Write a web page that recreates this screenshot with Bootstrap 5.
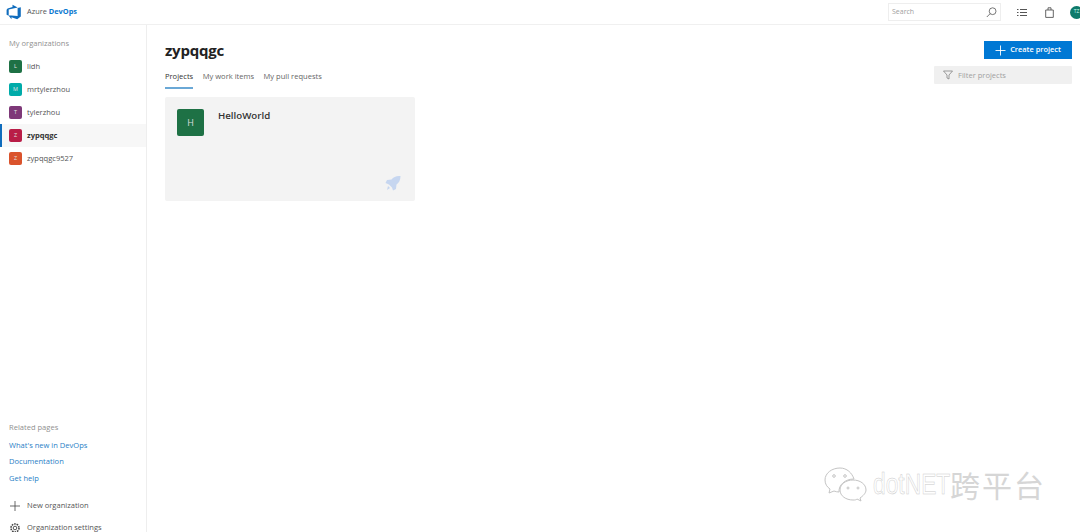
<!DOCTYPE html>
<html lang="en"><head><meta charset="utf-8"><title>Azure DevOps</title>
<link href="https://cdn.jsdelivr.net/npm/bootstrap@5.3.0/dist/css/bootstrap.min.css" rel="stylesheet">
<style>
html,body{height:532px;overflow:hidden}
body{font-family:"Open Sans","Noto Sans",sans-serif;font-size:7.55px;color:#333;background:#fff;position:relative}
.topbar{height:25px;border-bottom:1px solid #f0f0f0;padding-left:6px}
.brand{font-size:7.4px;margin-left:5px;color:#555}
.brand b{color:#0a78d0;font-weight:700}
.searchbox{width:113px;height:18px;border:1px solid #eee;margin-right:16px;padding:0 3px 0 3px;color:#a0a0a0;font-size:7px}
.topicon{margin-right:18px}
.topicon.bagicon{margin-right:16px}
.useravatar{width:13px;height:13px;border-radius:50%;background:#0e7a6b;color:#cfe;font-size:5px;margin-right:-3px;flex:none;overflow:hidden}
.sidebar{width:147px;height:507px;border-right:1px solid #eee;overflow:hidden;flex:none}
.sidehead{color:#909090;padding:13px 0 0 9px;height:30px;line-height:10px;flex:none}
.orgrow{height:23px;padding-left:9px;color:#555;flex:none}
.orgrow.current{background:#f7f7f7;border-left:2px solid #0f6cbd;padding-left:7px;font-weight:700;color:#333}
.orgmark{width:13px;height:13px;border-radius:2px;color:#e0e0e0;font-size:5.5px;margin-right:5px;flex:none;font-weight:400}
.relhead{color:#909090;padding-left:9px;height:17px;line-height:13px;flex:none}
.rellink{display:block;color:#2a80c6;text-decoration:none;padding-left:9px;height:16.500px;line-height:14px;flex:none}
.sideaction{height:22px;color:#555;padding-left:9px;flex:none}
.sideaction svg{margin-right:6px;flex:none}
.sideaction.lastone{margin-bottom:-7px}
.mainpane{padding:0 8px 0 18px}
.pagetitle{font-size:15px;font-weight:700;color:#222;margin:0;line-height:20px;padding-top:15px;height:36px;letter-spacing:-.2px}
.tabrow{height:28px}
.tabitem{margin-right:9.500px;color:#666;padding-top:9px;height:28px;line-height:12px}
.tabitem.on{color:#333;border-bottom:2px solid #6aa8d6;box-sizing:border-box}
.createbtn{background:#0078d4;color:#fff;width:88px;height:18px;font-size:7.4px;font-weight:600;border:0;border-radius:0;padding:0}
.createbtn:hover{background:#0078d4;color:#fff}
.filterbox{width:138px;height:18px;background:#f0f0f0;border-radius:1px;color:#a0a0a0;padding-left:9px;margin-top:5px}
.filterbox span{margin-left:5px;padding-top:1px}
.projcard{width:250px;height:104px;background:#f3f3f3;border:0;border-radius:2px;margin-top:8px;padding:12px;position:relative}
.projmark{width:27px;height:27px;background:#1e7145;color:#ddd;font-size:9px;border-radius:2px;flex:none}
.projname{font-size:9.700px;font-weight:600;color:#333;margin-left:14px;line-height:14px}
.projrocket{position:absolute;right:14px;bottom:10px}
.wmark{position:absolute;left:824px;top:466px;pointer-events:none}
.wmlatin,.wmcjk{line-height:36px;white-space:nowrap}
.wmlatin{color:#fff;-webkit-text-stroke:.5px #cacaca;display:inline-block;width:77px;margin-left:5px;font-family:"Liberation Sans",sans-serif;font-size:30px;transform:scaleX(.76);transform-origin:left center}
.wmcjk{color:#d6d6d6;font-family:"Noto Sans CJK SC",sans-serif;font-size:30px;letter-spacing:2px}
</style></head><body>
<div class="d-flex flex-column">
<header class="topbar d-flex align-items-center">
<svg width="16" height="16" viewBox="0 0 16 16"><path d="M14.800 3.200v9.200l-3.600 2.900-5.700-2v2L2.300 11.300l9.300.8V4.100zM11.700 3.600 6.500.8v2.100L1.600 4.400 .6 5.800v5l2.100.9V5.400z" fill="#0f6cbd"/></svg>
<span class="brand">Azure <b>DevOps</b></span>
<div class="ms-auto d-flex align-items-center">
<div class="searchbox d-flex align-items-center justify-content-between"><span>Search</span>
<svg width="11" height="11" viewBox="0 0 11 11" fill="none" stroke="#555" stroke-width=".8"><circle cx="6.600" cy="4.200" r="3.400"/><path d="M4.200 6.600.8 10"/></svg></div>
<svg class="topicon" width="10" height="9" viewBox="0 0 10 9" stroke="#555" fill="none"><path d="M0 1.500h1.500M3 1.500h7M0 4.500h1.500M3 4.500h7M0 7.500h1.500M3 7.500h7"/></svg>
<svg class="topicon bagicon" width="9" height="11" viewBox="0 0 9 11" stroke="#555" fill="none" stroke-width=".9"><path d="M.7 3h7.600v7.400H.7zM3 3V.8h3V3"/></svg>
<div class="useravatar d-flex align-items-center justify-content-center">TZ</div>
</div></header>
<div class="d-flex flex-grow-1">
<aside class="sidebar d-flex flex-column">
<div class="sidehead">My organizations</div>
<div class="orgrow d-flex align-items-center"><span class="orgmark d-flex align-items-center justify-content-center" style="background:#1e7145">L</span>lidh</div>
<div class="orgrow d-flex align-items-center"><span class="orgmark d-flex align-items-center justify-content-center" style="background:#00aba9">M</span>mrtylerzhou</div>
<div class="orgrow d-flex align-items-center"><span class="orgmark d-flex align-items-center justify-content-center" style="background:#7e3878">T</span>tylerzhou</div>
<div class="orgrow current d-flex align-items-center"><span class="orgmark d-flex align-items-center justify-content-center" style="background:#b91d47">Z</span>zypqqgc</div>
<div class="orgrow d-flex align-items-center"><span class="orgmark d-flex align-items-center justify-content-center" style="background:#da532c">Z</span>zypqqgc9527</div>
<div class="mt-auto"></div>
<div class="relhead">Related pages</div>
<a class="rellink" href="#">What's new in DevOps</a>
<a class="rellink" href="#">Documentation</a>
<a class="rellink" href="#">Get help</a>
<div class="sideaction d-flex align-items-center mt-2"><svg width="12" height="12" viewBox="0 0 12 12" stroke="#444" stroke-width=".8"><path d="M6 1v10M1 6h10"/></svg>New organization</div>
<div class="sideaction lastone d-flex align-items-center"><svg width="12" height="12" viewBox="0 0 12 12" fill="none" stroke="#444" stroke-width=".9"><circle cx="6" cy="6" r="1.800"/><circle cx="6" cy="6" r="4" stroke-dasharray="1.600 .9" stroke-width="1.600"/></svg>Organization settings</div>
</aside>
<main class="mainpane flex-grow-1">
<div class="d-flex justify-content-between align-items-start">
<h1 class="pagetitle">zypqqgc</h1>
<button class="createbtn btn d-flex align-items-center justify-content-center mt-3"><svg width="11" height="11" viewBox="0 0 11 11" stroke="#fff" stroke-width=".9" class="me-1"><path d="M5.500.5v10M.5 5.500h10"/></svg>Create project</button>
</div>
<div class="tabrow d-flex justify-content-between">
<div class="d-flex">
<div class="tabitem on">Projects</div><div class="tabitem">My work items</div><div class="tabitem">My pull requests</div>
</div>
<div class="filterbox d-flex align-items-center"><svg width="10" height="10" viewBox="0 0 10 10" fill="none" stroke="#777" stroke-width=".7"><path d="M.5 1h9L6 5v4L4 8V5z"/></svg><span>Filter projects</span></div>
</div>
<div class="card projcard"><div class="d-flex"><div class="projmark d-flex align-items-center justify-content-center">H</div><div class="projname">HelloWorld</div></div>
<svg class="projrocket" width="16" height="16" viewBox="0 0 16 16"><path d="M15.500 1c-4-.5-7 1-9 3.500L2 5 .5 8 4 9.500 7 12.500 8 15.500 11 14l.5-4.500C14 8 15.500 5 15.500 1z" fill="#c6d6f0"/><path d="M3 11l2 2-3 2z" fill="#c6d6f0"/></svg>
</div>
</main>
</div>
</div>
<div class="wmark d-flex align-items-center">
<svg width="44" height="36" viewBox="0 0 44 36" fill="#fff" stroke="#c4c4c4" stroke-width="1"><path d="M16 2C8 2 1 7 1 14c0 4 2 7 5 9l-1 4 5-2c2 .6 3 1 5 1-.5-7 6-13 15-13C28 7 23 2 16 2z"/><path d="M29 14c-7 0-13 4-13 10s6 10 13 10c2 0 3 0 4-1l4 2-1-3c3-2 6-5 6-8 0-6-6-10-13-10z"/><circle cx="10" cy="10" r="1.300"/><circle cx="21" cy="10" r="1.300"/><circle cx="24" cy="22" r="1"/><circle cx="34" cy="22" r="1"/></svg>
<span class="wmlatin">dotNET</span><span class="wmcjk">跨平台</span>
</div>
<script src="https://cdn.jsdelivr.net/npm/bootstrap@5.3.0/dist/js/bootstrap.bundle.min.js"></script>
</body></html>
